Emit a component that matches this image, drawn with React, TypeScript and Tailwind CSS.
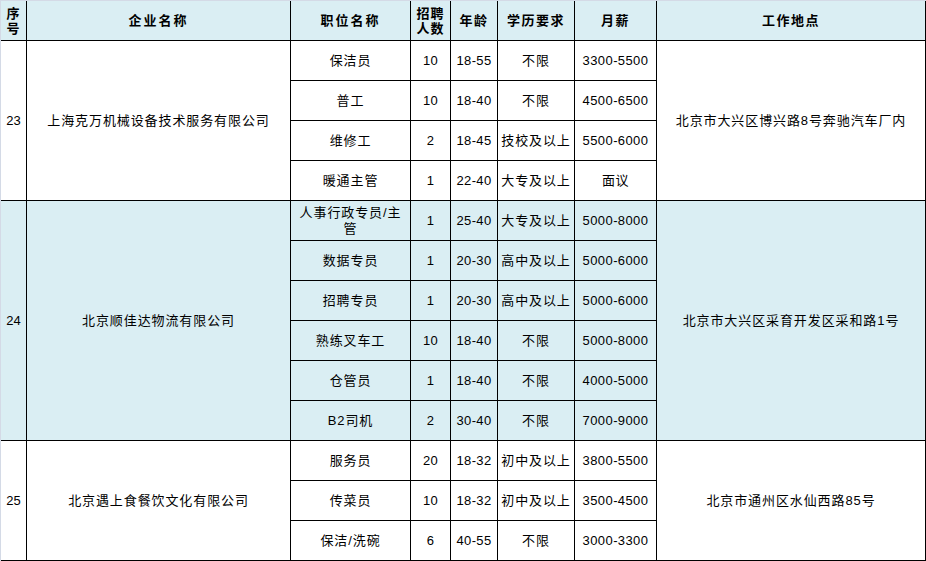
import React from "react";

const BLUE = "bg-[#daeef3]";

type Job = { title: React.ReactNode; n: string; age: string; edu: string; pay: string };
type Group = { no: string; company: string; addr: string; blue: boolean; jobs: Job[] };

const groups: Group[] = [
  {
    no: "23",
    company: "上海克万机械设备技术服务有限公司",
    addr: "北京市大兴区博兴路8号奔驰汽车厂内",
    blue: false,
    jobs: [
      { title: "保洁员", n: "10", age: "18-55", edu: "不限", pay: "3300-5500" },
      { title: "普工", n: "10", age: "18-40", edu: "不限", pay: "4500-6500" },
      { title: "维修工", n: "2", age: "18-45", edu: "技校及以上", pay: "5500-6000" },
      { title: "暖通主管", n: "1", age: "22-40", edu: "大专及以上", pay: "面议" },
    ],
  },
  {
    no: "24",
    company: "北京顺佳达物流有限公司",
    addr: "北京市大兴区采育开发区采和路1号",
    blue: true,
    jobs: [
      {
        title: (
          <span className="leading-[16px]">
            人事行政专员/主
            <br />
            管
          </span>
        ),
        n: "1",
        age: "25-40",
        edu: "大专及以上",
        pay: "5000-8000",
      },
      { title: "数据专员", n: "1", age: "20-30", edu: "高中及以上", pay: "5000-6000" },
      { title: "招聘专员", n: "1", age: "20-30", edu: "高中及以上", pay: "5000-6000" },
      { title: "熟练叉车工", n: "10", age: "18-40", edu: "不限", pay: "5000-8000" },
      { title: "仓管员", n: "1", age: "18-40", edu: "不限", pay: "4000-5000" },
      { title: "B2司机", n: "2", age: "30-40", edu: "不限", pay: "7000-9000" },
    ],
  },
  {
    no: "25",
    company: "北京遇上食餐饮文化有限公司",
    addr: "北京市通州区水仙西路85号",
    blue: false,
    jobs: [
      { title: "服务员", n: "20", age: "18-32", edu: "初中及以上", pay: "3800-5500" },
      { title: "传菜员", n: "10", age: "18-32", edu: "初中及以上", pay: "3500-4500" },
      { title: "保洁/洗碗", n: "6", age: "40-55", edu: "不限", pay: "3000-3300" },
    ],
  },
];

const spanClass: Record<number, string> = {
  3: "row-span-3",
  4: "row-span-4",
  6: "row-span-6",
};

function Cell({
  children,
  className = "",
}: {
  children: React.ReactNode;
  className?: string;
}) {
  return (
    <div
      className={`flex items-center justify-center text-center whitespace-nowrap pt-px ${className}`}
    >
      {children}
    </div>
  );
}

export default function App() {
  const font = { fontFamily: '"Liberation Sans", "Noto Sans CJK SC", sans-serif' };
  return (
    <div className="w-[926px] h-[561px] bg-white" style={font}>
      <div className="grid grid-cols-[25px_263px_119px_39px_46px_76px_81px_268px] auto-rows-[39px] gap-px bg-black border-l border-t border-[#d4dae6] pr-px pb-px text-[13px] text-black tracking-[0.9px]">
        <Cell className={`${BLUE} font-bold leading-[15px]`}>
          <span>
            序<br />号
          </span>
        </Cell>
        <Cell className={`${BLUE} font-bold tracking-[2px]`}>企业名称</Cell>
        <Cell className={`${BLUE} font-bold tracking-[2px]`}>职位名称</Cell>
        <Cell className={`${BLUE} font-bold leading-[15px]`}>
          <span>
            招聘<br />人数
          </span>
        </Cell>
        <Cell className={`${BLUE} font-bold tracking-[1.5px]`}>年龄</Cell>
        <Cell className={`${BLUE} font-bold tracking-[1.5px]`}>学历要求</Cell>
        <Cell className={`${BLUE} font-bold tracking-[1.5px]`}>月薪</Cell>
        <Cell className={`${BLUE} font-bold tracking-[1.5px]`}>工作地点</Cell>

        {groups.map((g) => {
          const bg = g.blue ? BLUE : "bg-white";
          const span = spanClass[g.jobs.length];
          return (
            <React.Fragment key={g.no}>
              <Cell className={`${bg} ${span} tracking-normal`}>{g.no}</Cell>
              <Cell className={`${bg} ${span}`}>{g.company}</Cell>
              {g.jobs.map((j, i) => (
                <React.Fragment key={i}>
                  <Cell className={`${bg} col-start-3`}>{j.title}</Cell>
                  <Cell className={`${bg} tracking-[0.3px]`}>{j.n}</Cell>
                  <Cell className={`${bg} tracking-[0.4px]`}>{j.age}</Cell>
                  <Cell className={bg}>{j.edu}</Cell>
                  <Cell className={`${bg} tracking-[0.4px]`}>{j.pay}</Cell>
                  {i === 0 && (
                    <Cell className={`${bg} ${span} col-start-8`}>{g.addr}</Cell>
                  )}
                </React.Fragment>
              ))}
            </React.Fragment>
          );
        })}
      </div>
    </div>
  );
}
